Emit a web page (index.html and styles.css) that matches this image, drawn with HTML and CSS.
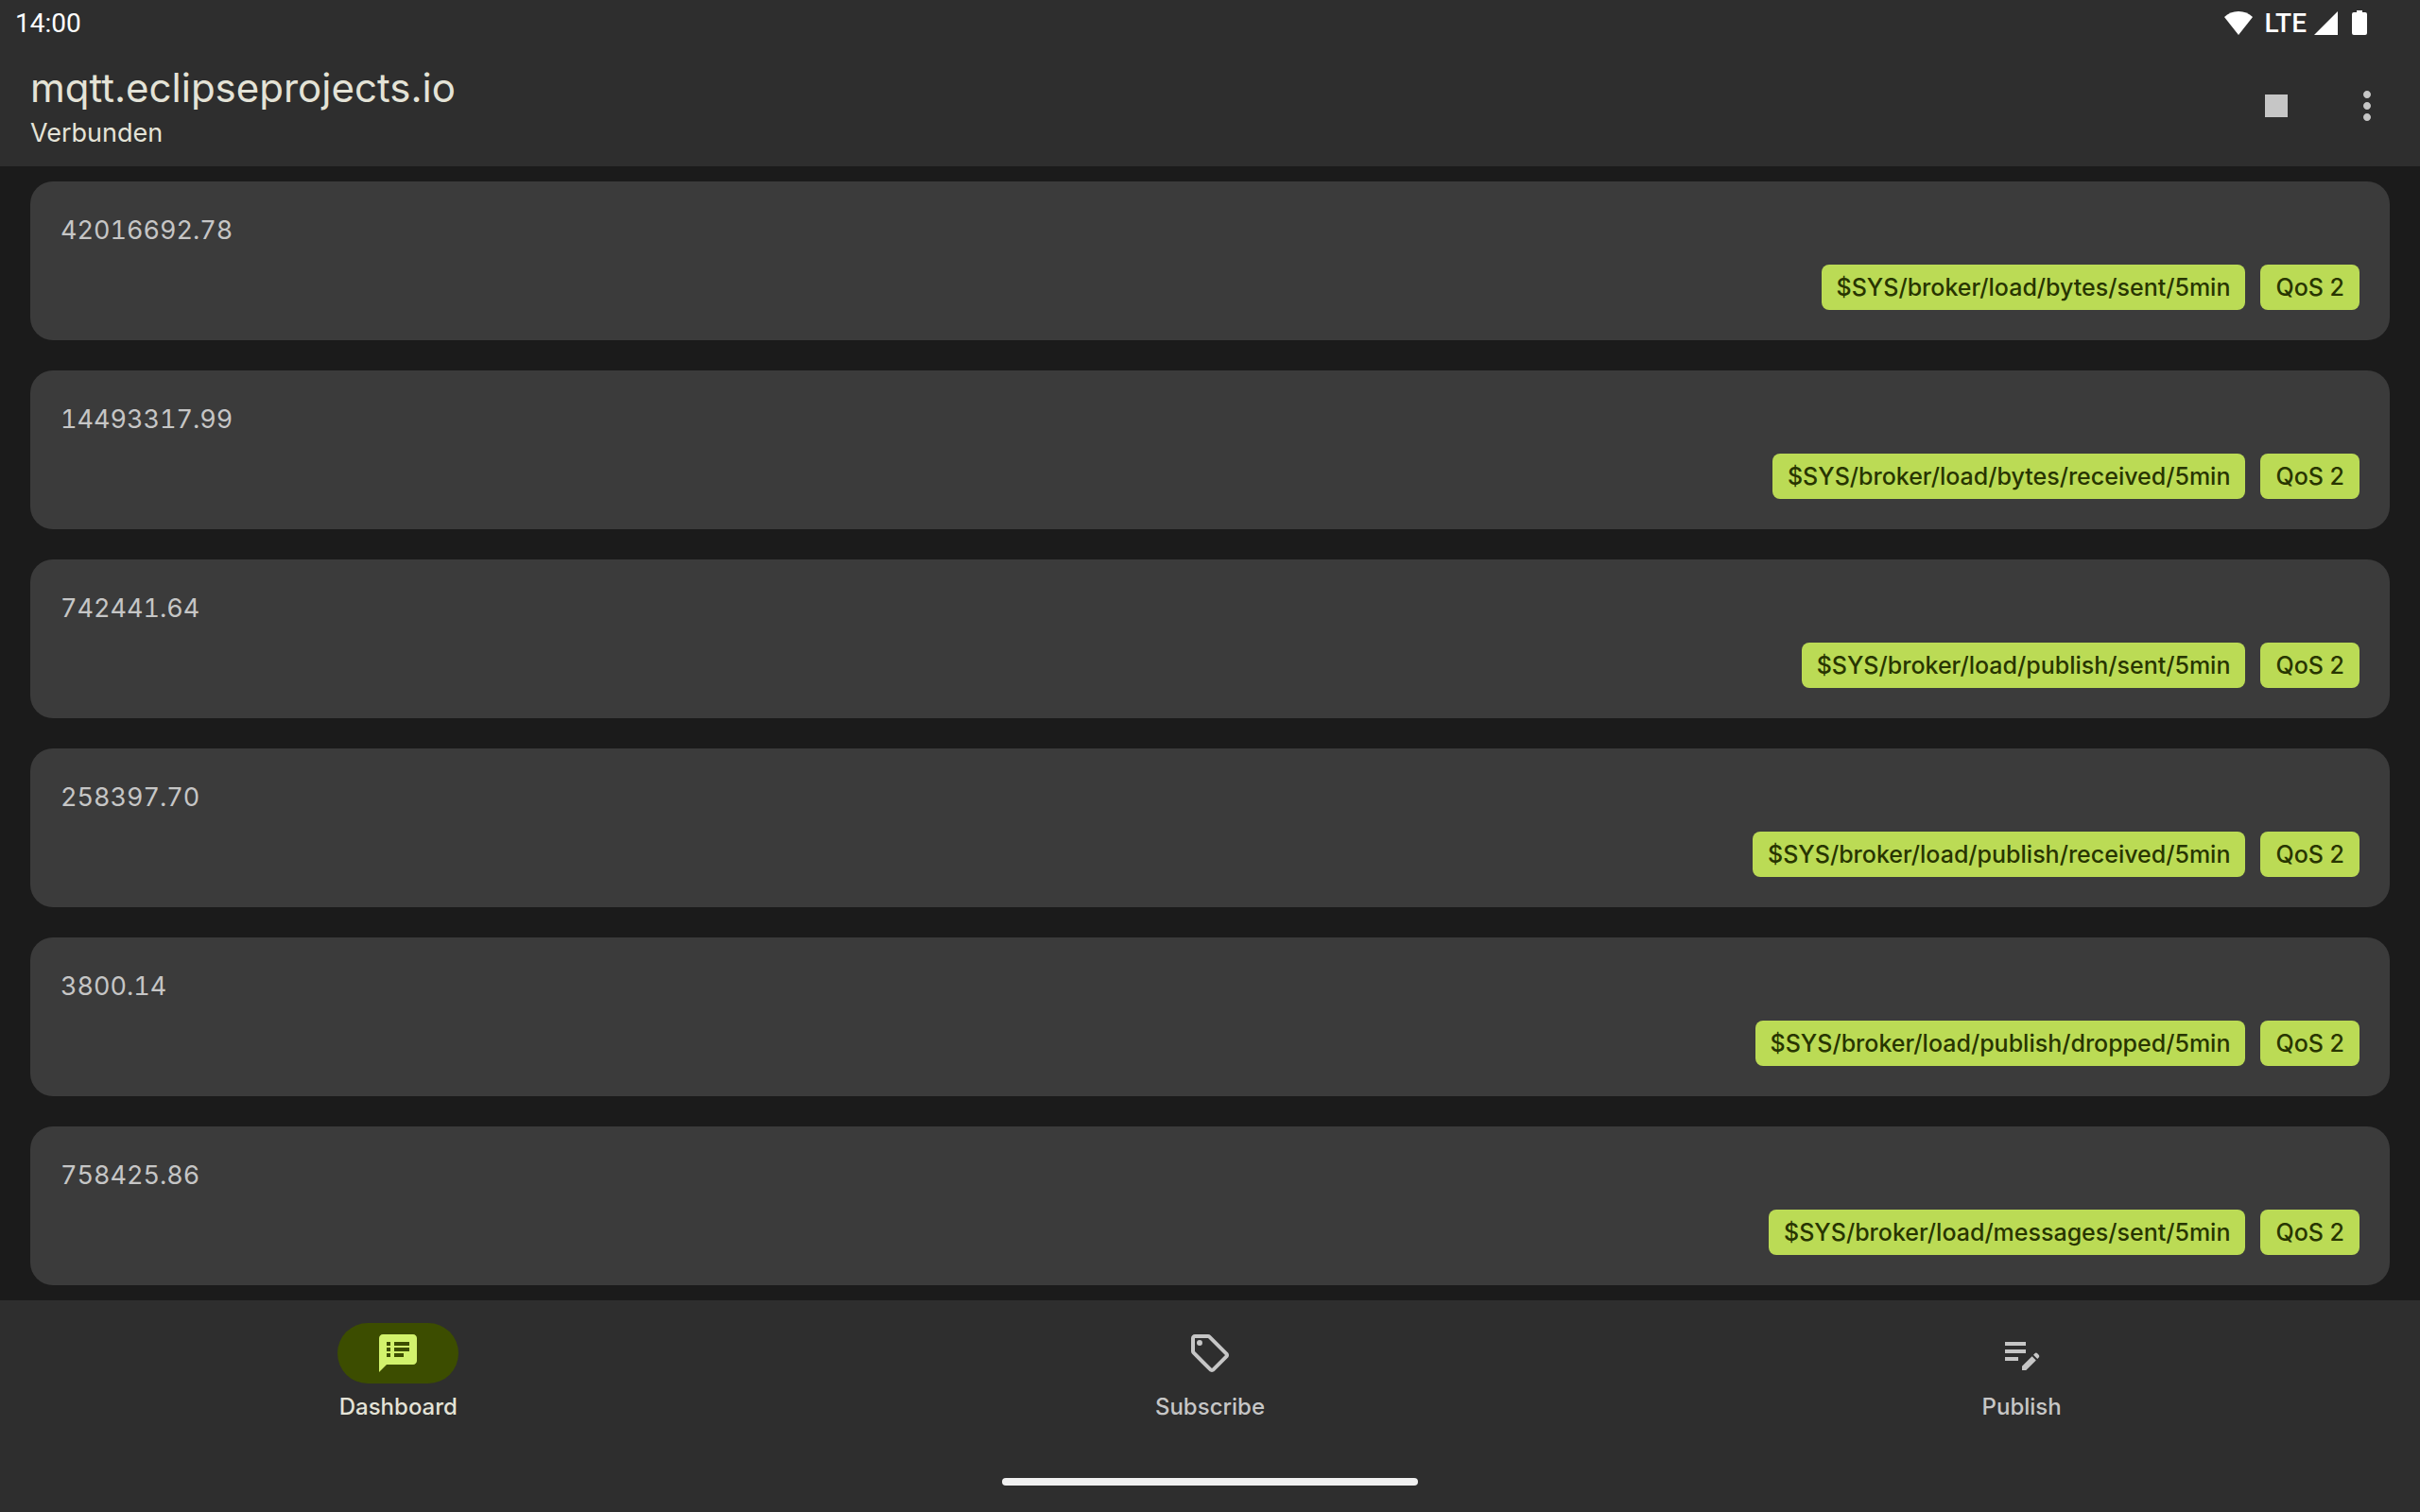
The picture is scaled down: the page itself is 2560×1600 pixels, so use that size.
FILE: index.html
```
<!DOCTYPE html>
<html lang="de">
  <head>
    <meta charset="utf-8" />
    <title>mqtt.eclipseprojects.io</title>
    <link rel="stylesheet" href="styles.css">
  </head>
  <body>
    <div class="status-bar">
      <span class="clock">14:00</span>
      <div class="status-icons">
        <svg class="wifi" viewBox="0 0 30 26"><path d="M15 26 L0 7 Q6 1 15 1 T30 7 Z" /></svg>
        <span class="network">LTE</span>
        <svg class="signal" viewBox="0 0 26 26"><path d="M25 1 V26 H0 Z" /></svg>
        <svg class="battery" viewBox="0 0 16 26"><path d="M5 0h6v2h3a2 2 0 0 1 2 2v20a2 2 0 0 1-2 2H2a2 2 0 0 1-2-2V4a2 2 0 0 1 2-2h3z" /></svg>
      </div>
    </div>

    <header class="app-bar">
      <div class="heading">
        <h1>mqtt.eclipseprojects.io</h1>
        <p>Verbunden</p>
      </div>
      <button class="icon-button" aria-label="Stop">
        <svg viewBox="0 0 24 24"><path d="M6 6h12v12H6z" /></svg>
      </button>
      <button class="icon-button" aria-label="Menu">
        <svg viewBox="0 0 24 24"><path d="M12 8c1.1 0 2-.9 2-2s-.9-2-2-2-2 .9-2 2 .9 2 2 2zm0 2c-1.1 0-2 .9-2 2s.9 2 2 2 2-.9 2-2-.9-2-2-2zm0 6c-1.1 0-2 .9-2 2s.9 2 2 2 2-.9 2-2-.9-2-2-2z" /></svg>
      </button>
    </header>

    <main class="messages">
      <div class="card">
        <div class="value">42016692.78</div>
        <div class="chips">
          <span class="chip">$SYS/broker/load/bytes/sent/5min</span>
          <span class="chip">QoS 2</span>
        </div>
      </div>
      <div class="card">
        <div class="value">14493317.99</div>
        <div class="chips">
          <span class="chip">$SYS/broker/load/bytes/received/5min</span>
          <span class="chip">QoS 2</span>
        </div>
      </div>
      <div class="card">
        <div class="value">742441.64</div>
        <div class="chips">
          <span class="chip">$SYS/broker/load/publish/sent/5min</span>
          <span class="chip">QoS 2</span>
        </div>
      </div>
      <div class="card">
        <div class="value">258397.70</div>
        <div class="chips">
          <span class="chip">$SYS/broker/load/publish/received/5min</span>
          <span class="chip">QoS 2</span>
        </div>
      </div>
      <div class="card">
        <div class="value">3800.14</div>
        <div class="chips">
          <span class="chip">$SYS/broker/load/publish/dropped/5min</span>
          <span class="chip">QoS 2</span>
        </div>
      </div>
      <div class="card">
        <div class="value">758425.86</div>
        <div class="chips">
          <span class="chip">$SYS/broker/load/messages/sent/5min</span>
          <span class="chip">QoS 2</span>
        </div>
      </div>
    </main>

    <footer class="bottom">
      <nav class="tabs">
        <button class="tab active">
          <span class="indicator">
            <svg viewBox="0 0 24 24"><path d="M20 2H4c-1.100 0-1.990.9-1.990 2L2 22l4-4h14c1.100 0 2-.9 2-2V4c0-1.100-.9-2-2-2zM8 14H6v-2h2v2zm0-3H6V9h2v2zm0-3H6V6h2v2zm7 6h-5v-2h5v2zm3-3h-8V9h8v2zm0-3h-8V6h8v2z" /></svg>
          </span>
          Dashboard
        </button>
        <button class="tab">
          <span class="indicator">
            <svg viewBox="0 0 24 24"><path d="M21.410 11.580l-9-9C12.050 2.220 11.550 2 11 2H4c-1.100 0-2 .9-2 2v7c0 .55.22 1.050.59 1.420l9 9c.36.36.86.58 1.410.58s1.050-.22 1.410-.59l7-7c.37-.36.59-.86.59-1.410s-.23-1.060-.59-1.420zM13 20.010L4 11V4h7v-.01l9 9-7 7.020z" /><circle cx="6.500" cy="6.500" r="1.500" /></svg>
          </span>
          Subscribe
        </button>
        <button class="tab">
          <span class="indicator">
            <svg viewBox="0 0 24 24"><path d="M3 10h11v2H3v-2zm0-2h11V6H3v2zm0 8h7v-2H3v2zm15.010-3.130l.71-.71a.996.996 0 0 1 1.410 0l.71.71c.39.39.39 1.020 0 1.410l-.71.71-2.120-2.120zm-.71.71l-5.300 5.300V21h2.120l5.300-5.300-2.120-2.120z" /></svg>
          </span>
          Publish
        </button>
      </nav>
      <div class="home-handle"></div>
    </footer>
  </body>
</html>
```
FILE: styles.css
```
* {
  box-sizing: border-box;
}
body {
  margin: 0;
  min-height: 100vh;
  display: flex;
  flex-direction: column;
  font-family: Inter, sans-serif;
  font-size: 27px;
  background-color: #1b1b1b;
  color: #c6c6c6;
}
svg {
  display: block;
  width: 48px;
  height: 48px;
  fill: currentColor;
}
button {
  border: none;
  padding: 0;
  background: none;
  color: inherit;
  font: inherit;
  cursor: pointer;
}
.status-bar {
  display: flex;
  justify-content: space-between;
  align-items: center;
  height: 48px;
  padding: 0 56px 0 16px;
  background-color: #2e2e2e;
  color: #fff;
  font-family: Roboto, sans-serif;
  font-size: 28px;
}
.status-icons {
  display: flex;
  align-items: center;
}
.status-icons svg {
  height: 26px;
}
.status-icons .wifi {
  width: 30px;
}
.status-icons .signal {
  width: 26px;
}
.status-icons .battery {
  width: 16px;
}
.network {
  margin: 0 8px 0 12px;
  font-weight: 500;
}
.signal {
  margin-right: 14px;
}
.app-bar {
  display: flex;
  align-items: center;
  height: 128px;
  padding: 0 8px 0 32px;
  background-color: #2e2e2e;
}
.heading {
  flex: 1;
  padding-top: 2px;
  color: #e4e3d7;
}
.heading h1 {
  margin: 0;
  font-size: 42px;
  line-height: 56px;
  font-weight: 400;
}
.heading p {
  margin: 0;
  line-height: 40px;
}
.icon-button {
  display: flex;
  align-items: center;
  justify-content: center;
  width: 96px;
  height: 96px;
}
.messages {
  flex: 1;
  display: flex;
  flex-direction: column;
  gap: 32px;
  padding: 16px 32px;
}
.card {
  padding: 32px;
  border-radius: 24px;
  background-color: #3b3b3b;
}
.value {
  line-height: 40px;
  font-variant-numeric: tabular-nums;
}
.chips {
  display: flex;
  justify-content: flex-end;
  gap: 16px;
  margin-top: 16px;
}
.chip {
  padding: 0 16px;
  border-radius: 8px;
  background-color: #bbdb55;
  color: #283500;
  font-size: 25px;
  line-height: 48px;
  font-weight: 500;
}
.bottom {
  padding: 24px 0 28px;
  background-color: #2e2e2e;
}
.tabs {
  display: grid;
  grid-template-columns: repeat(3, 1fr);
  gap: 16px;
}
.tab {
  display: flex;
  flex-direction: column;
  align-items: center;
  gap: 8px;
  font-size: 24px;
  line-height: 34px;
  font-weight: 500;
}
.tab.active {
  color: #e4e3d7;
}
.indicator {
  display: flex;
  align-items: center;
  justify-content: center;
  width: 128px;
  height: 64px;
  border-radius: 32px;
}
.active .indicator {
  background-color: #3c4d00;
  color: #d2f26d;
}
.home-handle {
  width: 440px;
  height: 8px;
  margin: 58px auto 0;
  border-radius: 4px;
  background-color: #f0f0f0;
}
```
